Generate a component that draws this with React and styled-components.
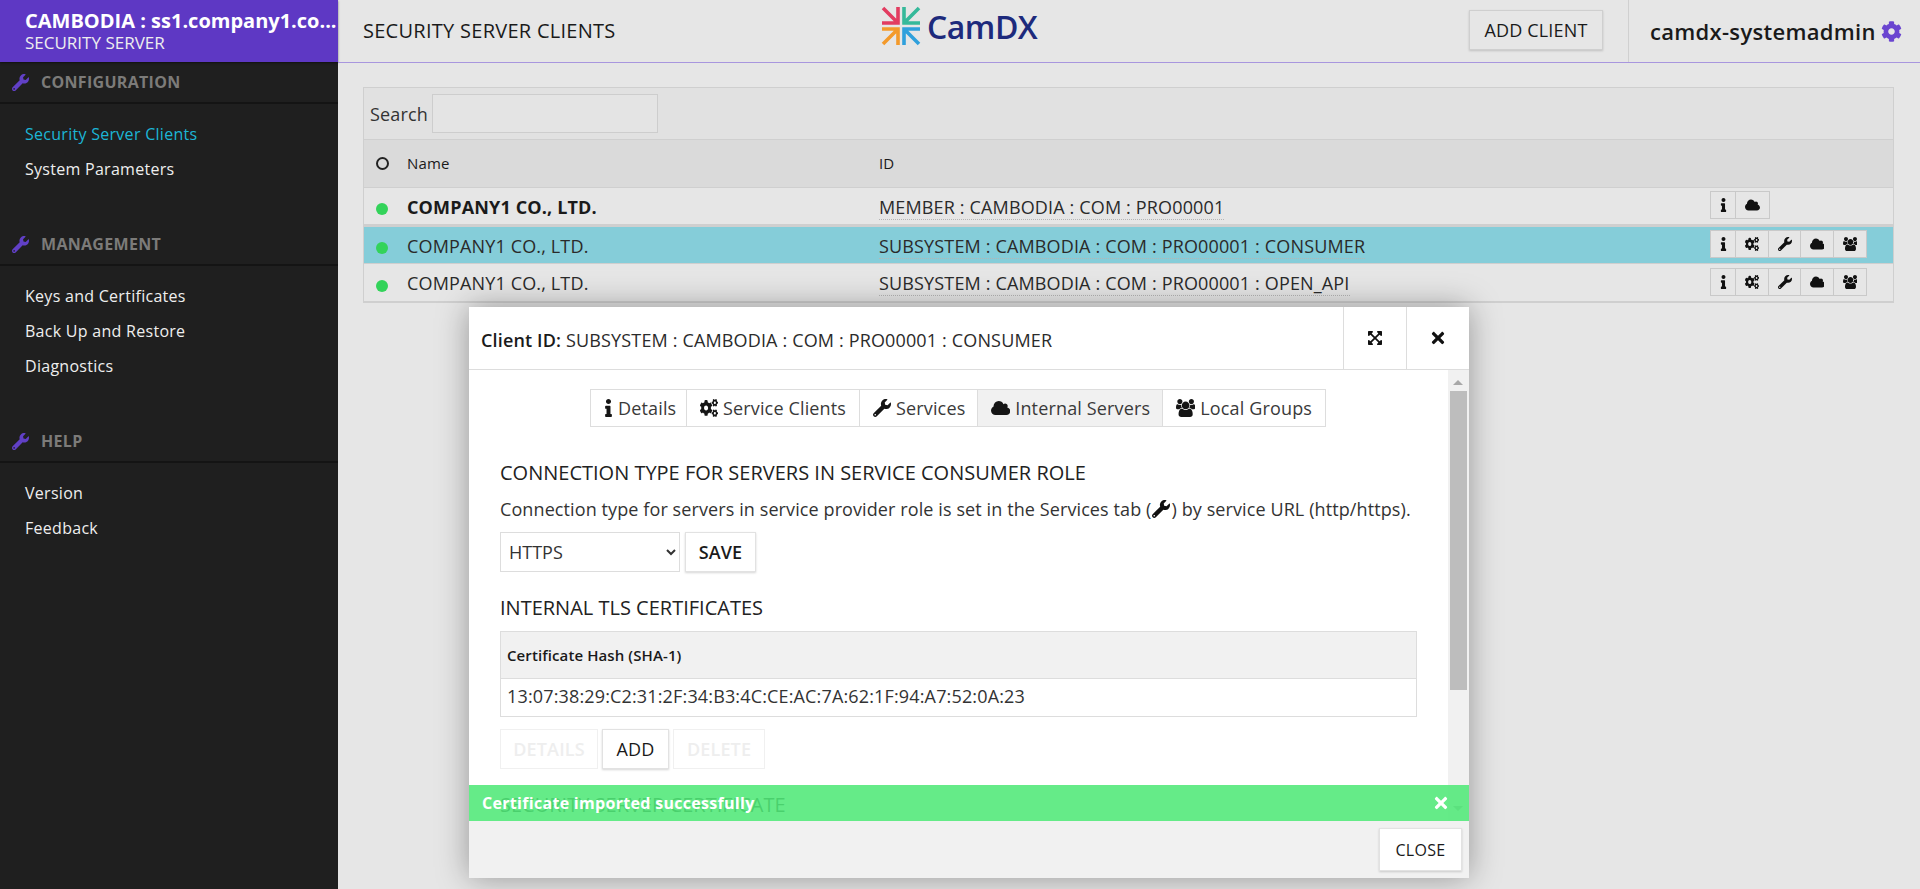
import React from "react";
import styled, { createGlobalStyle } from "styled-components";
import {
  FaCog,
  FaCogs,
  FaExpandArrowsAlt,
  FaInfo,
  FaTimes,
  FaWrench,
} from "react-icons/fa";

const GlobalStyle = createGlobalStyle`
  html, body {
    margin: 0;
    height: 100%;
    overflow: hidden;
    background: #e6e6e6;
    font-family: "Open Sans", "Noto Sans", sans-serif;
    font-size: 18px;
    letter-spacing: 0.15px;
    color: #222;
  }
  * { box-sizing: border-box; }
`;

const Page = styled.div`
  position: relative;
  display: grid;
  grid-template-columns: 338px 1fr;
  height: 889px;
  overflow: hidden;
`;

const Sidebar = styled.aside`
  background: #1f1f1f;
  display: flex;
  flex-direction: column;
`;

const Brand = styled.div`
  height: 62px;
  padding: 9px 0 0 25px;
  background: #5e38c4;
  color: #fff;
  box-shadow: 0 1px 2px rgba(0, 0, 0, 0.5);
`;

const BrandTitle = styled.div`
  font-size: 20px;
  line-height: 24px;
  font-weight: 700;
  letter-spacing: 0;
  white-space: nowrap;
`;

const BrandSub = styled.div`
  font-size: 17px;
  line-height: 19px;
  letter-spacing: 0;
  color: #eee;
`;

const NavGroup = styled.section`
  padding-bottom: 37px;
`;

const NavHeading = styled.h3`
  display: flex;
  align-items: center;
  gap: 12px;
  height: 42px;
  margin: 0;
  padding-left: 12px;
  border-bottom: 2px solid #141414;
  color: #7c7b79;
  font-size: 16px;
  font-weight: 700;
  letter-spacing: 0.3px;
  svg {
    color: #6140c6;
    font-size: 17px;
  }
`;

const NavList = styled.div`
  padding-top: 13px;
`;

const NavItem = styled.div`
  height: 35px;
  line-height: 35px;
  padding-left: 25px;
  font-size: 16px;
  letter-spacing: 0.28px;
  color: ${(p) => (p.$active ? "#1cb6d6" : "#eee")};
`;

const Main = styled.main`
  display: flex;
  flex-direction: column;
  min-width: 0;
`;

const TopBar = styled.header`
  display: flex;
  align-items: center;
  height: 63px;
  border-bottom: 1px solid #a896de;
  padding-left: 25px;
`;

const PageTitle = styled.h1`
  margin: 0 0 2px;
  font-size: 20px;
  font-weight: 500;
  letter-spacing: 0.27px;
  color: #1a1a1a;
  flex: 0 0 518px;
`;

const Logo = styled.div`
  display: flex;
  align-items: center;
  align-self: flex-start;
  gap: 6px;
  width: 588px;
  height: 52px;
  svg { flex: none; }
`;

const LogoText = styled.span`
  font-size: 32px;
  font-weight: 600;
  color: #1d2a7c;
  letter-spacing: -0.5px;
`;

const BaseButton = styled.button`
  font-family: inherit;
  font-size: 18px;
  font-weight: 500;
  letter-spacing: 0.15px;
  padding: 0;
  color: #1a1a1a;
  background: ${(p) => (p.$tone === "grey" ? "#e6e6e6" : "#fff")};
  border: 1px solid ${(p) => (p.$tone === "grey" ? "#cfcfcf" : "#e2e2e2")};
  box-shadow: 0 1px 2px rgba(0, 0, 0, 0.16);
  ${(p) => p.disabled && "color: #eee; box-shadow: none; border-color: #f0f0f0;"}
`;

const AddClient = styled(BaseButton)`
  width: 134px;
  height: 40px;
  margin: -3px 25px 0 0;
`;

const UserBox = styled.div`
  display: flex;
  align-items: center;
  gap: 5px;
  height: 62px;
  padding-left: 21px;
  border-left: 1px solid #d0d0d0;
  font-size: 22px;
  font-weight: 600;
  letter-spacing: 0.3px;
  white-space: nowrap;
  color: #1a1a1a;
  svg {
    color: #6a45d0;
    font-size: 21px;
    flex: none;
  }
`;

const Content = styled.div`
  padding: 24px 26px 0 25px;
`;

const TableBox = styled.div`
  border: 1px solid #cfcfcf;
`;

const SearchRow = styled.div`
  display: flex;
  align-items: center;
  gap: 4px;
  height: 52px;
  padding-left: 6px;
  background: #e1e1e1;
  border-bottom: 1px solid #cfcfcf;
  color: #333;
`;

const SearchInput = styled.input`
  width: 226px;
  height: 39px;
  background: #e4e4e4;
  border: 1px solid #cdcdcd;
  outline: none;
`;

const Row = styled.div`
  display: grid;
  grid-template-columns: 43px 472px 831px 1fr;
  align-items: center;
  height: ${(p) => p.$h}px;
  background: ${(p) => p.$bg || "#e6e6e6"};
  border-bottom: ${(p) => p.$line || 1}px solid #cfcfcf;
  color: #2a2a2a;
`;

const HeadRow = styled(Row)`
  font-size: 15px;
  font-weight: 500;
  color: #1a1a1a;
`;

const HeadCell = styled.span`
  margin-top: -2px;
`;

const Ring = styled.span`
  justify-self: start;
  width: 13px;
  height: 13px;
  margin-left: 12px;
  border: 2px solid #222;
  border-radius: 50%;
`;

const Dot = styled.span`
  justify-self: start;
  width: 12px;
  height: 12px;
  margin: 6px 0 0 12px;
  border-radius: 50%;
  background: #33d35a;
`;

const NameCell = styled.span`
  font-weight: ${(p) => (p.$bold ? 700 : 400)};
  color: ${(p) => (p.$bold ? "#1a1a1a" : "#2a2a2a")};
  margin-top: 1px;
`;

const IdCell = styled.span`
  justify-self: start;
  line-height: 23px;
  margin-top: 3px;
  border-bottom: 1px dotted #b5b5b5;
`;

const Actions = styled.div`
  display: flex;
  height: 28px;
  margin-top: -2px;
  width: fit-content;
  border: 1px solid #c9c9c9;
  background: #e6e6e6;
`;

const ActionCell = styled.span`
  display: flex;
  align-items: center;
  justify-content: center;
  width: ${(p) => p.$w}px;
  border-left: ${(p) => (p.$first ? "none" : "1px solid #c9c9c9")};
  font-size: 14px;
  color: #111;
`;

const Dialog = styled.div`
  position: absolute;
  left: 469px;
  top: 307px;
  width: 1000px;
  height: 571px;
  display: flex;
  flex-direction: column;
  background: #fff;
  box-shadow: 0 0 30px rgba(0, 0, 0, 0.35);
`;

const DialogHead = styled.div`
  display: flex;
  align-items: center;
  flex: 0 0 63px;
  padding-left: 12px;
  border-bottom: 1px solid #ddd;
  color: #2b2b2b;
`;

const DialogTitle = styled.div`
  flex: 1;
  margin-top: 3px;
  b {
    font-weight: 600;
    color: #1a1a1a;
  }
`;

const HeadButton = styled.span`
  display: flex;
  align-items: center;
  justify-content: center;
  width: 63px;
  height: 62px;
  border-left: 1px solid #ddd;
  font-size: ${(p) => p.$size}px;
  color: #111;
`;

const DialogBody = styled.div`
  flex: 1;
  display: flex;
  min-height: 0;
  overflow: hidden;
`;

const BodyInner = styled.div`
  flex: 1;
  padding: 19px 31px 0;
`;

const Tabs = styled.div`
  display: flex;
  justify-content: center;
  height: 38px;
  margin-right: 1px;
`;

const Tab = styled.div`
  display: flex;
  align-items: center;
  gap: 5px;
  width: ${(p) => p.$w}px;
  padding-left: 13px;
  border: 1px solid #ddd;
  border-left-width: ${(p) => (p.$first ? 1 : 0)}px;
  background: ${(p) => (p.$on ? "#f1f1f1" : "#fff")};
  color: #3a3a3a;
  svg { color: #151515; flex: none; }
`;

const SectionTitle = styled.h2`
  margin: 0;
  font-size: 20px;
  line-height: 24px;
  font-weight: 400;
  letter-spacing: 0;
  color: #222;
  margin-top: ${(p) => p.$top}px;
`;

const Hint = styled.p`
  margin: 12px 0 0;
  line-height: 24px;
  letter-spacing: 0.1px;
  white-space: nowrap;
  color: #333;
  svg {
    color: #111;
    vertical-align: -2px;
    margin: 0 1px;
  }
`;

const SaveRow = styled.div`
  display: flex;
  gap: 5px;
  margin-top: 11px;
  height: 40px;
`;

const TypeSelect = styled.select`
  width: 180px;
  height: 40px;
  padding-left: 4px;
  background: #fff;
  border: 1px solid #ddd;
  font-family: inherit;
  font-size: 18px;
  color: #333;
`;

const SaveButton = styled(BaseButton)`
  width: 71px;
  height: 40px;
  font-weight: 600;
`;

const CertTable = styled.div`
  margin-top: 11px;
  border: 1px solid #ddd;
`;

const CertHead = styled.div`
  height: 47px;
  line-height: 47px;
  padding-left: 6px;
  background: #f1f1f1;
  border-bottom: 1px solid #ddd;
  font-size: 15px;
  font-weight: 600;
  letter-spacing: 0.1px;
  color: #1a1a1a;
`;

const CertRow = styled.div`
  height: 37px;
  line-height: 35px;
  padding-left: 6px;
  color: #333;
`;

const ButtonRow = styled.div`
  display: flex;
  gap: 4px;
  margin-top: 12px;
`;

const RowButton = styled(BaseButton)`
  width: ${(p) => p.$w}px;
  height: 40px;
  font-weight: ${(p) => (p.disabled ? 600 : 500)};
`;

const Scrollbar = styled.div`
  flex: 0 0 21px;
  position: relative;
  background: #f1f1f1;
`;

const ScrollThumb = styled.div`
  height: 299px;
  margin: 21px 2px 0;
  background: #bdbdbd;
`;

const ScrollArrow = styled.span`
  position: absolute;
  left: 5px;
  width: 0;
  height: 0;
  border-left: 5px solid transparent;
  border-right: 5px solid transparent;
  ${(p) =>
    p.$down
      ? "bottom: 10px; border-top: 5px solid #a8a8a8;"
      : "top: 10px; border-bottom: 5px solid #a8a8a8;"}
`;

const Toast = styled.div`
  position: absolute;
  left: 0;
  right: 0;
  top: 478px;
  height: 36px;
  display: flex;
  align-items: center;
  justify-content: space-between;
  padding: 0 19px 0 13px;
  background: rgba(80, 232, 120, 0.88);
  color: #fff;
  font-size: 16px;
  font-weight: 700;
  letter-spacing: 0.3px;
  svg { font-size: 18px; }
`;

const DialogFoot = styled.div`
  display: flex;
  justify-content: flex-end;
  align-items: center;
  flex: 0 0 57px;
  padding-right: 7px;
  background: #f1f1f1;
`;

const CloseButton = styled(BaseButton)`
  width: 83px;
  height: 43px;
  font-size: 16px;
  letter-spacing: 0.3px;
`;

// narrow box so the label sits close to the glyph
const InfoIcon = styled(FaInfo)`
  width: 0.5em;
`;

// the reference uses the older, taller cogs, cloud and users glyphs
const CogsIcon = () => <FaCogs preserveAspectRatio="none" />;

const CloudIcon = () => (
  <svg width="1.07em" height="1em" viewBox="0 0 1920 1792" fill="currentColor">
    <path d="M1920 1216q0 159-112.5 271.5t-271.5 112.5h-1088q-185 0-316.5-131.5t-131.5-316.5q0-132 71-241.5t187-163.5q-2-28-2-43 0-212 150-362t362-150q158 0 286.5 88t187.5 230q70-62 166-62 106 0 181 75t75 181q0 75-41 138 129 30 213 134.5t84 239.5z" />
  </svg>
);

const UsersIcon = () => (
  <svg width="1.07em" height="1em" viewBox="0 0 1920 1792" fill="currentColor">
    <path d="M593 896q-162 5-265 128h-134q-82 0-138-40.5t-56-118.5q0-353 124-353 6 0 43.5 21t97.5 42.5 119 21.5q67 0 133-23-5 37-5 66 0 139 81 256zm1071 637q0 120-73 189.5t-194 69.5h-874q-121 0-194-69.5t-73-189.5q0-53 3.5-103.5t14-109 26.5-108.5 43-97.5 62-81 85.5-53.5 111.5-20q10 0 43 21.5t73 48 107 48 135 21.5 135-21.5 107-48 73-48 43-21.5q61 0 111.5 20t85.5 53.5 62 81 43 97.5 26.5 108.5 14 109 3.5 103.5zm-1024-1277q0 106-75 181t-181 75-181-75-75-181 75-181 181-75 181 75 75 181zm704 384q0 159-112.5 271.5t-271.5 112.5-271.5-112.5-112.5-271.5 112.5-271.5 271.5-112.5 271.5 112.5 112.5 271.5zm576 225q0 78-56 118.5t-138 40.5h-134q-103-123-265-128 81-117 81-256 0-29-5-66 66 23 133 23 59 0 119-21.5t97.5-42.5 43.5-21q124 0 124 353zm-128-609q0 106-75 181t-181 75-181-75-75-181 75-181 181-75 181 75 75 181z" />
  </svg>
);

const nav = [
  { title: "CONFIGURATION", items: ["Security Server Clients", "System Parameters"] },
  { title: "MANAGEMENT", items: ["Keys and Certificates", "Back Up and Restore", "Diagnostics"] },
  { title: "HELP", items: ["Version", "Feedback"] },
];

const fullActions = [
  [InfoIcon, 24],
  [CogsIcon, 33],
  [FaWrench, 32],
  [CloudIcon, 33],
  [UsersIcon, 33],
];

const clients = [
  { id: "MEMBER : CAMBODIA : COM : PRO00001", bold: true, h: 39, line: 3, actions: [[InfoIcon, 24], [CloudIcon, 34]] },
  { id: "SUBSYSTEM : CAMBODIA : COM : PRO00001 : CONSUMER", bg: "#85cdd9", h: 37, actions: fullActions },
  { id: "SUBSYSTEM : CAMBODIA : COM : PRO00001 : OPEN_API", h: 38, line: 0, actions: fullActions },
];

const tabs = [
  { label: "Details", Icon: InfoIcon, w: 97 },
  { label: "Service Clients", Icon: CogsIcon, w: 173 },
  { label: "Services", Icon: FaWrench, w: 118 },
  { label: "Internal Servers", Icon: CloudIcon, w: 185, on: true },
  { label: "Local Groups", Icon: UsersIcon, w: 163 },
];

const LogoMark = () => (
  <svg width="40" height="40" viewBox="0 0 40 40" fill="none" strokeWidth="3.6">
    <path stroke="#e23c60" d="M1 17h16V1M2 2l15 15" />
    <path stroke="#35b99a" d="M39 17H23V1M38 2L23 17" />
    <path stroke="#f39a2b" d="M1 23h16v16M2 38l15-15" />
    <path stroke="#2fa0dc" d="M39 23H23v16M38 38L23 23" />
  </svg>
);

export default function App() {
  return (
    <>
      <GlobalStyle />
      <Page>
        <Sidebar>
          <Brand>
            <BrandTitle>CAMBODIA : ss1.company1.co...</BrandTitle>
            <BrandSub>SECURITY SERVER</BrandSub>
          </Brand>
          {nav.map((group) => (
            <NavGroup key={group.title}>
              <NavHeading>
                <FaWrench />
                {group.title}
              </NavHeading>
              <NavList>
                {group.items.map((item) => (
                  <NavItem key={item} $active={item === "Security Server Clients"}>
                    {item}
                  </NavItem>
                ))}
              </NavList>
            </NavGroup>
          ))}
        </Sidebar>

        <Main>
          <TopBar>
            <PageTitle>SECURITY SERVER CLIENTS</PageTitle>
            <Logo>
              <LogoMark />
              <LogoText>CamDX</LogoText>
            </Logo>
            <AddClient $tone="grey">ADD CLIENT</AddClient>
            <UserBox>
              camdx-systemadmin
              <FaCog />
            </UserBox>
          </TopBar>

          <Content>
            <TableBox>
              <SearchRow>
                Search
                <SearchInput />
              </SearchRow>
              <HeadRow $h={48} $bg="#dadada">
                <Ring />
                <HeadCell>Name</HeadCell>
                <HeadCell>ID</HeadCell>
                <HeadCell />
              </HeadRow>
              {clients.map((client) => (
                <Row key={client.id} $h={client.h} $bg={client.bg} $line={client.line}>
                  <Dot />
                  <NameCell $bold={client.bold}>COMPANY1 CO., LTD.</NameCell>
                  <IdCell>{client.id}</IdCell>
                  <Actions>
                    {client.actions.map(([Icon, w], i) => (
                      <ActionCell key={i} $w={w} $first={i === 0}>
                        <Icon />
                      </ActionCell>
                    ))}
                  </Actions>
                </Row>
              ))}
            </TableBox>
          </Content>
        </Main>

        <Dialog>
          <DialogHead>
            <DialogTitle>
              <b>Client ID:</b> SUBSYSTEM : CAMBODIA : COM : PRO00001 : CONSUMER
            </DialogTitle>
            <HeadButton $size={16}>
              <FaExpandArrowsAlt />
            </HeadButton>
            <HeadButton $size={18}>
              <FaTimes />
            </HeadButton>
          </DialogHead>

          <DialogBody>
            <BodyInner>
              <Tabs>
                {tabs.map(({ label, Icon, w, on }, i) => (
                  <Tab key={label} $w={w} $on={on} $first={i === 0}>
                    <Icon />
                    {label}
                  </Tab>
                ))}
              </Tabs>

              <SectionTitle $top={34}>CONNECTION TYPE FOR SERVERS IN SERVICE CONSUMER ROLE</SectionTitle>
              <Hint>
                Connection type for servers in service provider role is set in the Services tab (
                <FaWrench />) by service URL (http/https).
              </Hint>
              <SaveRow>
                <TypeSelect defaultValue="HTTPS">
                  <option>HTTP</option>
                  <option>HTTPS</option>
                  <option>HTTPS NO AUTH</option>
                </TypeSelect>
                <SaveButton>SAVE</SaveButton>
              </SaveRow>

              <SectionTitle $top={24}>INTERNAL TLS CERTIFICATES</SectionTitle>
              <CertTable>
                <CertHead>Certificate Hash (SHA-1)</CertHead>
                <CertRow>13:07:38:29:C2:31:2F:34:B3:4C:CE:AC:7A:62:1F:94:A7:52:0A:23</CertRow>
              </CertTable>
              <ButtonRow>
                <RowButton $w={98} disabled>DETAILS</RowButton>
                <RowButton $w={67}>ADD</RowButton>
                <RowButton $w={92} disabled>DELETE</RowButton>
              </ButtonRow>

              <SectionTitle $top={24}>SECURITY SERVER CERTIFICATE</SectionTitle>
            </BodyInner>
            <Scrollbar>
              <ScrollArrow />
              <ScrollThumb />
              <ScrollArrow $down />
            </Scrollbar>
          </DialogBody>

          <Toast>
            Certificate imported successfully
            <FaTimes />
          </Toast>

          <DialogFoot>
            <CloseButton>CLOSE</CloseButton>
          </DialogFoot>
        </Dialog>
      </Page>
    </>
  );
}
